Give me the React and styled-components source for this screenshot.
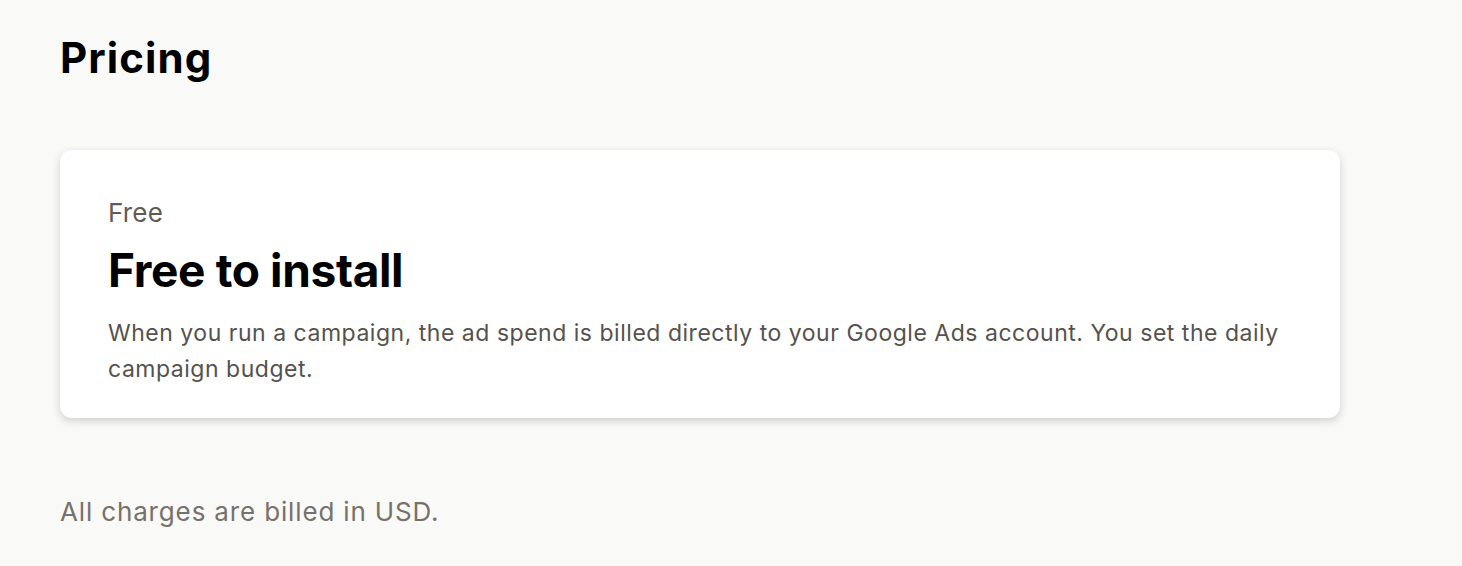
import React from 'react'
import styled, {createGlobalStyle} from 'styled-components'

const GlobalStyle = createGlobalStyle`
    body {
        margin: 0;
        background: #f9f9f8;
        font-family: Inter, "Noto Sans", sans-serif;
    }
`

export const Page = styled.div`
    padding: 26px 60px 0 60px;
    width: 1280px;
`

export const Title = styled.h1`
    margin: 0;
    font-size: 42px;
    font-weight: 700;
    line-height: 64px;
    letter-spacing: 1.1px;
    color: #000;
`

export const Card = styled.div`
    margin-top: 60px;
    background: #fff;
    border-radius: 12px;
    box-shadow: 0 3px 8px rgba(0, 0, 0, 0.17);
    padding: 45px 48px 31px 48px;
`

export const Label = styled.div`
    font-size: 26px;
    line-height: 36px;
    letter-spacing: 0.2px;
    color: #5f5b55;
`

export const Heading = styled.h2`
    margin: 11px 0 0 0;
    font-size: 46px;
    font-weight: 700;
    line-height: 56px;
    letter-spacing: -0.35px;
    color: #000;
`

export const Text = styled.p`
    margin: 17px 0 0 0;
    font-size: 23px;
    line-height: 36px;
    letter-spacing: 0.52px;
    color: #55524d;
`

export const Note = styled.p`
    margin: 74px 0 0 0;
    font-size: 26px;
    line-height: 40px;
    letter-spacing: 0.85px;
    color: #76716b;
`

export default function App() {
    return <>
        <GlobalStyle/>
        <Page>
            <Title>Pricing</Title>
            <Card>
                <Label>Free</Label>
                <Heading>Free to install</Heading>
                <Text>When you run a campaign, the ad spend is billed directly to your Google Ads account. You set the daily campaign budget.</Text>
            </Card>
            <Note>All charges are billed in USD.</Note>
        </Page>
    </>
}
